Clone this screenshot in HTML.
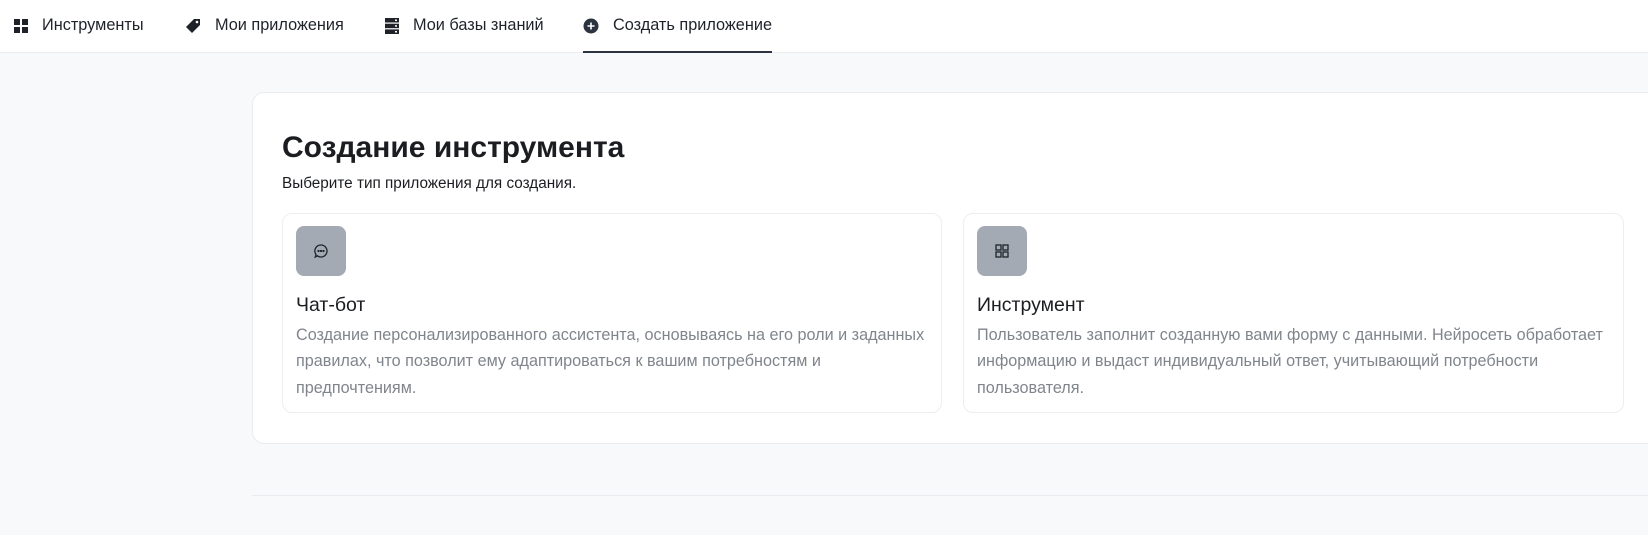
<!DOCTYPE html>
<html><head><meta charset="utf-8"><style>
*{box-sizing:border-box;margin:0;padding:0}
body{width:1648px;height:535px;overflow:hidden;background:#f8f9fa;font-family:"Liberation Sans",sans-serif;position:relative}
.nav{position:absolute;left:0;top:0;width:1648px;height:53px;background:#fff;border-bottom:1px solid #e9ebee}
.ni{position:absolute;top:-1px;height:53px;display:flex;align-items:center;font-size:16.3px;color:#1f2329}
.ni svg{margin-right:14px}
.act{position:absolute;left:583px;top:51px;width:189px;height:2px;background:#2c3440}
.outer{position:absolute;left:252px;top:92px;width:1420px;height:352px;background:#fff;border:1px solid #e9ebee;border-radius:12px}
h1{position:absolute;left:282px;top:131px;font-size:30px;font-weight:bold;color:#1b1d21}
.sub{position:absolute;left:282px;top:175px;font-size:15.3px;color:#1b1d21}
.card{position:absolute;top:213px;height:200px;background:#fff;border:1px solid #eceef1;border-radius:10px}
.ib{position:absolute;left:13px;top:12px;width:50px;height:50px;border-radius:8px;background:#a3aab3;display:flex;align-items:center;justify-content:center}
.ct{position:absolute;left:13px;top:80px;font-size:19.5px;color:#1b1d21}
.cd{position:absolute;left:13px;top:108px;font-size:16.2px;line-height:26.3px;color:#80858c;width:640px}
.div{position:absolute;left:252px;top:495px;width:1400px;height:1px;background:#e9ebee}
</style></head><body>
<div class="nav">
<div class="ni" style="left:14px"><svg width="14" height="14" viewBox="0 0 14 14" fill="#1f2329"><rect x="0" y="0" width="6" height="6"/><rect x="8" y="0" width="6" height="6"/><rect x="0" y="8" width="6" height="6"/><rect x="8" y="8" width="6" height="6"/></svg>Инструменты</div>
<div class="ni" style="left:185px"><svg width="16" height="16" viewBox="0 0 16 16" fill="#1f2329"><path d="M9 1h6v6l-8 8-6-6z"/><circle cx="12" cy="4" r="1.3" fill="#fff"/></svg>Мои приложения</div>
<div class="ni" style="left:385px"><svg width="14" height="16" viewBox="0 0 14 16" fill="#1f2329"><rect x="0" y="0" width="14" height="4.5"/><rect x="0" y="5.7" width="14" height="4.5"/><rect x="0" y="11.4" width="14" height="4.6"/><rect x="10" y="1.5" width="2" height="1.5" fill="#fff"/><rect x="10" y="7.2" width="2" height="1.5" fill="#fff"/><rect x="10" y="13" width="2" height="1.5" fill="#fff"/></svg>Мои базы знаний</div>
<div class="ni" style="left:583px"><svg width="16" height="16" viewBox="0 0 16 16"><circle cx="8" cy="8" r="7.5" fill="#2c3440"/><path d="M8 4.5v7M4.5 8h7" stroke="#fff" stroke-width="1.6"/></svg>Создать приложение</div>
<div class="act"></div>
</div>
<div class="outer"></div>
<h1>Создание инструмента</h1>
<div class="sub">Выберите тип приложения для создания.</div>
<div class="card" style="left:282px;width:660px">
<div class="ib"><svg width="16" height="16" viewBox="0 0 16 16" fill="none" stroke="#1f2329" stroke-width="1.3"><path d="M8 2a6 6 0 1 1-3.6 10.8L2.3 14l.7-2.5A6 6 0 0 1 8 2z"/><circle cx="5.5" cy="8" r=".5" fill="#1f2329"/><circle cx="8" cy="8" r=".5" fill="#1f2329"/><circle cx="10.5" cy="8" r=".5" fill="#1f2329"/></svg></div>
<div class="ct">Чат-бот</div>
<div class="cd">Создание персонализированного ассистента, основываясь на его роли и заданных правилах, что позволит ему адаптироваться к вашим потребностям и предпочтениям.</div>
</div>
<div class="card" style="left:963px;width:661px">
<div class="ib"><svg width="14" height="14" viewBox="0 0 14 14" fill="none" stroke="#1f2329" stroke-width="1.3"><rect x="1" y="1" width="5" height="5"/><rect x="8" y="1" width="5" height="5"/><rect x="1" y="8" width="5" height="5"/><rect x="8" y="8" width="5" height="5"/></svg></div>
<div class="ct">Инструмент</div>
<div class="cd">Пользователь заполнит созданную вами форму с данными. Нейросеть обработает информацию и выдаст индивидуальный ответ, учитывающий потребности пользователя.</div>
</div>
<div class="div"></div>
</body></html>
